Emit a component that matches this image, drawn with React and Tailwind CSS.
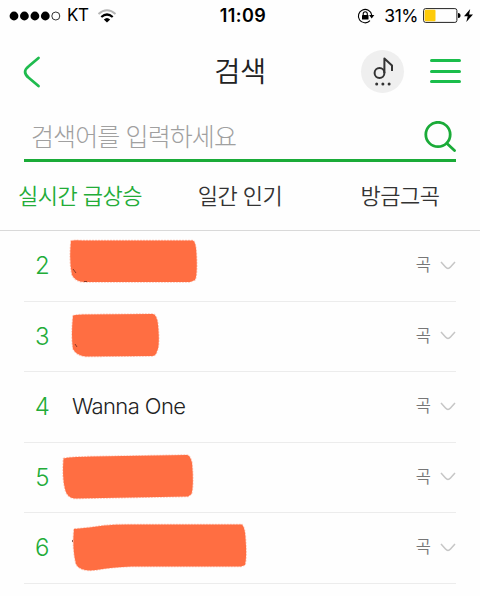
import { useState } from "react";

const TABS = ["실시간 급상승", "일간 인기", "방금그곡"];

// Rows with a `mask` are scribbled over instead of showing the keyword.
const KEYWORDS = [
  {
    rank: 2,
    mask: "M71 10 Q73 9 82 9.500 L193 9.500 Q196 11 196.500 24 Q197.500 44 195 49 L190 51 L84 51 Q76 51 72 44 Q69 30 71 10Z",
    specks: "M73 38 l3 4 M84 50.5 h3",
  },
  {
    rank: 3,
    mask: "M73 14 Q74 12.500 83 12.500 L153 12 Q157 13 158 23 Q160 44 157 49 Q156 54 152 54 L86 54.500 Q77 54 73 47 Q71 34 73 14Z",
    specks: "M75 42 l2 3",
  },
  { rank: 4, name: "Wanna One" },
  {
    rank: 5,
    mask: "M63.500 15.500 Q68 14 92 13.500 L187 12 Q190 12 192 20 Q194 42 191.500 51 L188 53.500 L75 55.500 Q67 55 65 46 Q62 34 63.500 15.500Z",
  },
  {
    rank: 6,
    mask: "M74 16 Q90 14.500 104 12.500 Q116 11 136 11.500 L242 11.500 Q245 15 245.500 25 Q247 44 245 52 L241 53.500 L132 53.500 Q112 54 96 57 Q80 59 76 51 Q72 35 74 16Z",
    specks: "M72.500 27 v2",
  },
];

function StatusBar() {
  return (
    <div className="flex h-[31px] items-center justify-between pl-[9px] pr-[6px] text-black">
      <div className="flex w-[190px] items-center">
        <svg width="52" height="10" viewBox="0 0 52 10">
          {[5, 15.4, 25.9, 36.3].map((x) => (
            <circle key={x} cx={x} cy="5" r="4.4" />
          ))}
          <circle cx="46.8" cy="5" r="4" fill="none" stroke="currentColor" strokeWidth="0.8" />
        </svg>
        <span className="ml-[6px] text-[17px] leading-none tracking-[-0.5px]">KT</span>
        <svg className="ml-[9px]" width="20" height="14" viewBox="0 0 20 14" fill="none" strokeWidth="2">
          <path d="M1.500 5 Q10 -2.500 18.500 5" stroke="#b5b5b5" />
          <path d="M4.300 8 Q10 3 15.700 8" stroke="#000" strokeWidth="2.2" />
          <path d="M6.800 10.500 Q10 7.500 13.200 10.500 L10 13.500Z" fill="#000" />
        </svg>
      </div>
      <span className="pl-[3px] text-[18px] font-semibold leading-none tracking-[0.4px]">11:09</span>
      <div className="flex w-[190px] items-center justify-end">
        <svg width="18" height="16" viewBox="0 0 18 16" fill="none" stroke="#000" strokeWidth="1.1">
          <path d="M13 12.700 A6.700 6.700 0 1 1 14.700 7" />
          <path d="M12.100 7 h5.200 l-2.600 3.400z" fill="#000" stroke="none" />
          <rect x="5" y="7" width="6.500" height="4.600" rx="0.6" fill="#000" stroke="none" />
          <path d="M6.200 7 V5.800 a2.050 2.050 0 0 1 4.100 0 V7" />
        </svg>
        <span className="ml-[9px] text-[17.5px] leading-none tracking-[-0.5px]">31%</span>
        <svg className="ml-[5px]" width="38" height="15" viewBox="0 0 38 15">
          <rect x="0.600" y="0.600" width="33.300" height="13.800" rx="2" fill="none" stroke="#222" />
          <rect x="1.700" y="1.700" width="10.800" height="11.600" rx="1" fill="#fecb0a" />
          <path d="M35 5 a2.500 2.500 0 0 1 0 5z" />
        </svg>
        <svg className="ml-[3px] mr-px" width="9" height="13" viewBox="0 0 9 13">
          <path d="M6.200 0 L0 7.300 h3.700 L2.300 13 L9 5.400 H5.100z" />
        </svg>
      </div>
    </div>
  );
}

function Header() {
  return (
    <header className="flex h-[80px] items-center justify-between pl-[23px] pr-[19px]">
      <button aria-label="뒤로" className="w-[100px] pt-px">
        <svg width="18" height="32" viewBox="0 0 18 32" fill="none" stroke="#1fbb4e" strokeWidth="2.800" strokeLinecap="round">
          <path d="M15.500 2 L6 10 Q-1.800 16 6 22 L15.500 30" />
        </svg>
      </button>
      <h1 className="mt-[2px] pr-[4px] text-[28.5px] font-[350] leading-none tracking-[-0.5px] text-[#222]">검색</h1>
      <div className="flex w-[100px] items-center">
        <button aria-label="음악 찾기" className="flex size-[43px] shrink-0 items-center justify-center rounded-full bg-[#efefef]">
          <svg width="43" height="43" viewBox="0 0 43 43" fill="none" stroke="#333" strokeWidth="2">
            <circle cx="18.500" cy="23" r="4.900" />
            <path d="M23.400 23 V8.500 L31 15.500 V21" strokeLinejoin="round" />
            <g fill="#333" stroke="none">
              <circle cx="15.700" cy="34" r="1.500" />
              <circle cx="21.900" cy="34" r="1.500" />
              <circle cx="28.100" cy="34" r="1.500" />
            </g>
          </svg>
        </button>
        <button aria-label="메뉴" className="ml-[26px] flex flex-col gap-[7.5px]">
          <span className="h-[3px] w-[31px] rounded-full bg-[#1abd4b]" />
          <span className="h-[3px] w-[31px] rounded-full bg-[#1abd4b]" />
          <span className="h-[3px] w-[31px] rounded-full bg-[#1abd4b]" />
        </button>
      </div>
    </header>
  );
}

function KeywordRow({ rank, name, mask, specks }) {
  return (
    <li className="relative mx-6 flex h-[70.5px] items-center border-b border-[#ececec]">
      <span className="w-[36px] pt-px text-center font-['Inter','Liberation_Sans',sans-serif] text-[24px] font-light tracking-[-0.5px] text-[#22ac38]">
        {rank}
      </span>
      <span className="ml-[12px] flex-1 font-['Inter','Liberation_Sans',sans-serif] text-[22px] font-light tracking-[-0.6px] text-[#222]">
        {name}
      </span>
      {mask && (
        <svg className="absolute -left-6 top-0" width="260" height="70" viewBox="0 0 260 70">
          <path d={mask} fill="#ff6e42" stroke="#ff6e42" strokeOpacity="0.35" strokeWidth="1.500" strokeDasharray="2 1" />
          {specks && <path d={specks} fill="none" stroke="#5a2518" strokeWidth="1" strokeOpacity="0.7" />}
        </svg>
      )}
      <span className="text-[16.5px] font-[350] text-[#777]">곡</span>
      <svg className="ml-[9px]" width="16" height="10" viewBox="0 0 16 10" fill="none" stroke="#c6c6c6" strokeWidth="1.500">
        <path d="M1 1 L5.500 6 Q8 8.800 10.500 6 L15 1" />
      </svg>
    </li>
  );
}

export default function App() {
  const [tab, setTab] = useState(0);

  return (
    <div className="h-[596px] w-[480px] overflow-hidden bg-[#fefefe] font-['Inter','Noto_Sans_CJK_KR',sans-serif]">
      <StatusBar />
      <Header />
      <div className="mx-6 flex h-[51px] items-center justify-between border-b-[3px] border-[#1aab38] pl-[7px] pt-[4px]">
        <input
          placeholder="검색어를 입력하세요"
          className="w-[300px] pt-[2px] text-[25px] font-light tracking-[-0.9px] outline-none placeholder:text-[#a0a0a0]"
        />
        <svg width="32" height="32" viewBox="0 0 32 32" fill="none" stroke="#1aab38" strokeWidth="2.800" strokeLinecap="round">
          <circle cx="14" cy="13.500" r="12.200" />
          <path d="M23 22.500 L30.500 29.500" />
        </svg>
      </div>
      <nav className="flex h-[69px] border-b border-[#d9d9d9]">
        {TABS.map((label, i) => (
          <button
            key={label}
            onClick={() => setTab(i)}
            className={`flex-1 pt-px text-[22px] font-[350] tracking-[-0.5px] ${
              tab === i ? "text-[#22ac38]" : "text-[#333]"
            }`}
          >
            {label}
          </button>
        ))}
      </nav>
      <ul>
        {KEYWORDS.map((k) => (
          <KeywordRow key={k.rank} {...k} />
        ))}
      </ul>
    </div>
  );
}
